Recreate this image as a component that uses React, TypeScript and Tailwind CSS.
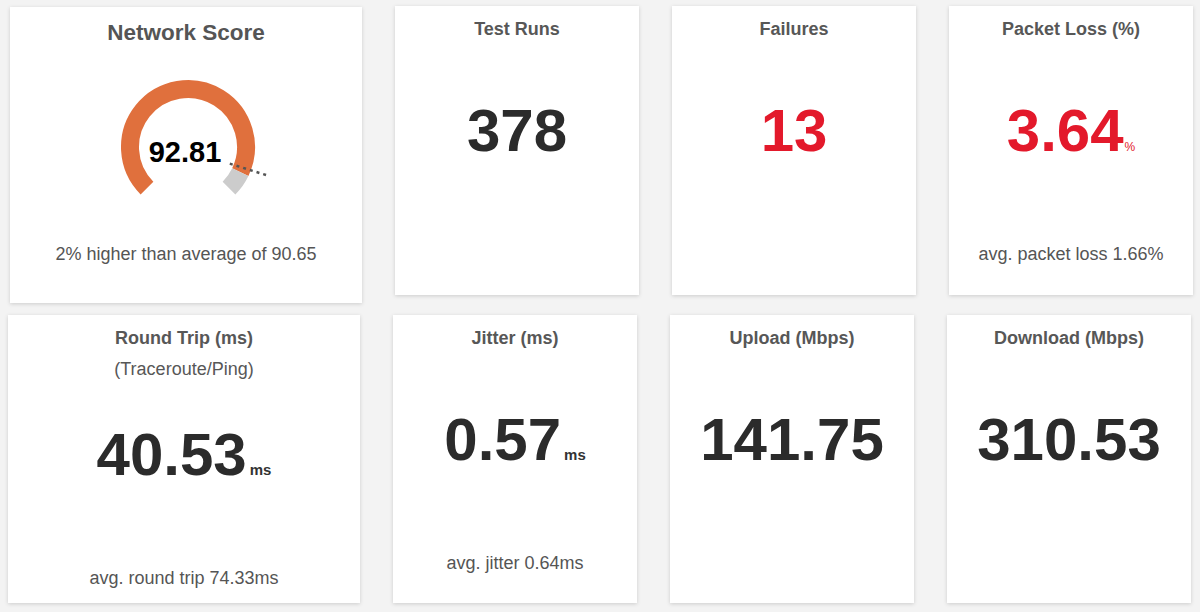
import { FC, ReactNode } from "react";

const font = { fontFamily: '"Liberation Sans", Arial, sans-serif' };

type StatProps = {
  title: string;
  sub?: string;
  value: string;
  unit?: string;
  red?: boolean;
  footer?: string;
  className?: string;
};

const Card: FC<{ className?: string; children: ReactNode }> = ({ className = "", children }) => (
  <div
    className={`bg-white shadow-[0_1px_4px_rgba(0,0,0,0.16)] flex flex-col items-center text-center ${className}`}
  >
    {children}
  </div>
);

const Stat: FC<StatProps> = ({ title, sub, value, unit, red, footer, className = "" }) => {
  const valueColor = red ? "text-[#e3192b]" : "text-[#2b2b2b]";
  return (
    <Card className={`w-[244px] pt-[12px] ${className}`}>
      <div className="text-[18px] leading-[22px] font-bold text-[#575757]">{title}</div>
      {sub && <div className="mt-[9px] text-[18px] leading-[22px] text-[#575757]">{sub}</div>}
      <div className={`${sub ? "mt-[40px]" : "mt-[56px]"} flex items-baseline ${valueColor}`}>
        <span className="text-[60px] leading-[70px] font-bold">{value}</span>
        {unit === "%" && <span className="text-[12px] ml-[1px]">%</span>}
        {unit === "ms" && <span className="text-[15px] font-bold ml-[3px] text-[#333]">ms</span>}
      </div>
      {footer && (
        <div className="mt-[77px] text-[18px] leading-[22px] text-[#555]">{footer}</div>
      )}
    </Card>
  );
};

// point on the gauge ring, angle in degrees clockwise from 12 o'clock
function pt(cx: number, cy: number, r: number, deg: number) {
  const a = (deg * Math.PI) / 180;
  return [cx + r * Math.sin(a), cy - r * Math.cos(a)];
}

const Gauge: FC<{ score: number; avg: number }> = ({ score, avg }) => {
  const cx = 102;
  const cy = 77;
  const r = 58;
  const toDeg = (v: number) => -135 + (v / 100) * 270;
  const [sx, sy] = pt(cx, cy, r, -135);
  const [mx, my] = pt(cx, cy, r, toDeg(score));
  const [ex, ey] = pt(cx, cy, r, 135);
  const [ax1, ay1] = pt(cx, cy, 45, toDeg(avg) + 2);
  const [ax2, ay2] = pt(cx, cy, 83, toDeg(avg));
  return (
    <svg width="200" height="130" viewBox="0 0 200 130" className="mt-[23px] block">
      <path
        d={`M ${sx} ${sy} A ${r} ${r} 0 1 1 ${mx} ${my}`}
        fill="none"
        stroke="#e0703d"
        strokeWidth="18"
      />
      <path
        d={`M ${mx} ${my} A ${r} ${r} 0 0 1 ${ex} ${ey}`}
        fill="none"
        stroke="#cccccc"
        strokeWidth="18"
      />
      <line
        x1={ax1}
        y1={ay1}
        x2={ax2}
        y2={ay2}
        stroke="#555"
        strokeWidth="2.5"
        strokeDasharray="3 4"
      />
      <text
        x="99"
        y="92"
        textAnchor="middle"
        fontSize="29"
        fontWeight="bold"
        fill="#000"
        style={font}
      >
        {score.toFixed(2)}
      </text>
    </svg>
  );
};

export default function App() {
  return (
    <div className="w-[1200px] h-[612px] bg-[#f3f3f3] overflow-hidden" style={font}>
      <div className="flex gap-[33px] pl-[10px] pt-[6px] items-start">
        <Card className="w-[352px] h-[296px] mt-[1px] pt-[12px]">
          <div className="text-[22.5px] leading-[28px] font-bold text-[#555]">Network Score</div>
          <Gauge score={92.81} avg={90.65} />
          <div className="mt-[43px] text-[18px] leading-[22px] text-[#555]">
            2% higher than average of 90.65
          </div>
        </Card>
        <Stat className="h-[289px]" title="Test Runs" value="378" />
        <Stat className="h-[289px]" title="Failures" value="13" red />
        <Stat
          className="h-[289px]"
          title="Packet Loss (%)"
          value="3.64"
          unit="%"
          red
          footer="avg. packet loss 1.66%"
        />
      </div>
      <div className="flex gap-[33px] pl-[8px] pt-[12px] items-start">
        <Stat
          className="!w-[352px] h-[288px]"
          title="Round Trip (ms)"
          sub="(Traceroute/Ping)"
          value="40.53"
          unit="ms"
          footer="avg. round trip 74.33ms"
        />
        <Stat className="h-[288px]" title="Jitter (ms)" value="0.57" unit="ms" footer="avg. jitter 0.64ms" />
        <Stat className="h-[288px]" title="Upload (Mbps)" value="141.75" />
        <Stat className="h-[288px]" title="Download (Mbps)" value="310.53" />
      </div>
    </div>
  );
}
